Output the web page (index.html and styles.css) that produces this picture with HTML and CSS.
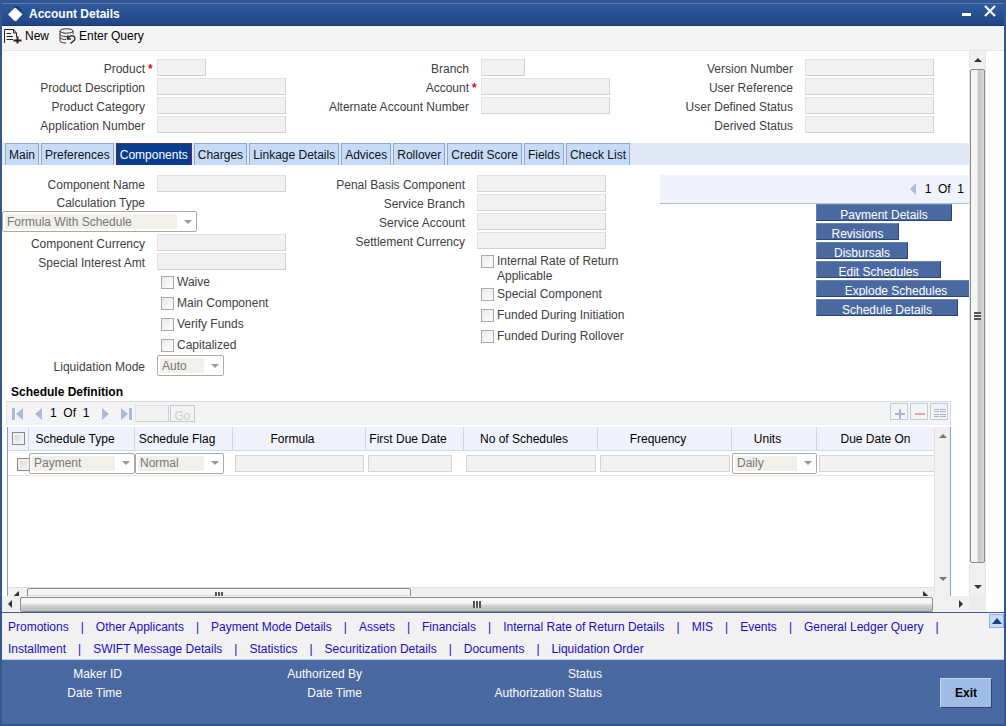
FILE: index.html
```html
<!DOCTYPE html>
<html lang="en">
<head>
<meta charset="utf-8">
<title>Account Details</title>
<link rel="stylesheet" href="styles.css">
</head>
<body>
<div class="window">
  <header class="titlebar">
    <svg class="logo" width="18" height="17" viewBox="0 0 18 17"><path d="M7 0h4l6 7.500-7 9H7z" fill="#0b3f78"/><path d="M9 2l7 6-7 8z" fill="#7fb0d8"/><path d="M8 1.500l7 7-7 7-7-7z" fill="#fff"/></svg>
    <h1>Account Details</h1>
    <div class="winbtns">
      <button type="button" aria-label="Minimize"><svg width="10" height="12" viewBox="0 0 10 12"><path d="M0 8h9v3H0z" fill="#fff"/></svg></button>
      <button type="button" aria-label="Close"><svg width="12" height="12" viewBox="0 0 12 12"><path d="M1 1l10 10M11 1L1 11" stroke="#fff" stroke-width="2.200"/></svg></button>
    </div>
  </header>

  <nav class="toolbar">
    <button type="button"><svg width="18" height="16" viewBox="0 0 18 16" fill="none" stroke="#222"><path d="M.5 15V1.500H9.500L12.500 5V9" /><path d="M9.500 1.500V5h3M2.500 5.500H7M2.500 8.500H9M2.500 11.500H9"/><path d="M9.500 12.500h8M13.500 8.500v7" stroke-width="2"/></svg>New</button>
    <button type="button"><svg width="17" height="16" viewBox="0 0 17 16" fill="none" stroke="#333"><ellipse cx="7.500" cy="3" rx="6.500" ry="2.200"/><path d="M1 3v10c0 1 3 2 6 2M14 3v3M1 6.500c1 2 6 2.500 9 1.500M1 9.500c1 1.500 4 2.200 6 2M1 12.500"/><path d="M8.500 10.500l3-2.500c4-1 5 2 4 4l-4 3.500M8.500 7.500v3.500H12" stroke-width="1.500"/></svg>Enter Query</button>
  </nav>

  <main class="work">
    <div class="workpane">
      <section class="keys">
        <div class="fieldcol">
          <div class="field"><label for="product">Product</label><i class="req">*</i><input id="product" class="w-code" disabled></div>
          <div class="field"><label for="pdesc">Product Description</label><input id="pdesc" disabled></div>
          <div class="field"><label for="pcat">Product Category</label><input id="pcat" disabled></div>
          <div class="field"><label for="appno">Application Number</label><input id="appno" disabled></div>
        </div>
        <div class="fieldcol">
          <div class="field"><label for="branch">Branch</label><input id="branch" class="w-branch" disabled></div>
          <div class="field"><label for="account">Account</label><i class="req">*</i><input id="account" disabled></div>
          <div class="field"><label for="altacc">Alternate Account Number</label><input id="altacc" disabled></div>
        </div>
        <div class="fieldcol">
          <div class="field"><label for="version">Version Number</label><input id="version" disabled></div>
          <div class="field"><label for="userref">User Reference</label><input id="userref" disabled></div>
          <div class="field"><label for="uds">User Defined Status</label><input id="uds" disabled></div>
          <div class="field"><label for="derived">Derived Status</label><input id="derived" disabled></div>
        </div>
      </section>

      <nav class="tabs">
        <a href="#">Main</a><a href="#">Preferences</a><a href="#" class="on">Components</a><a href="#">Charges</a><a href="#">Linkage Details</a><a href="#">Advices</a><a href="#">Rollover</a><a href="#">Credit Score</a><a href="#">Fields</a><a href="#">Check List</a>
      </nav>

      <section class="panel">
        <div class="fieldcol">
          <div class="field"><label for="cname">Component Name</label><input id="cname" disabled></div>
          <div class="field short"><label for="calc">Calculation Type</label></div>
          <select id="calc" class="calc" disabled><option>Formula With Schedule</option></select>
          <div class="field"><label for="ccy">Component Currency</label><input id="ccy" disabled></div>
          <div class="field"><label for="spint">Special Interest Amt</label><input id="spint" disabled></div>
          <div class="checks">
            <label><input type="checkbox" disabled>Waive</label>
            <label><input type="checkbox" disabled>Main Component</label>
            <label><input type="checkbox" disabled>Verify Funds</label>
            <label><input type="checkbox" disabled>Capitalized</label>
          </div>
          <div class="field"><label for="liq">Liquidation Mode</label><select id="liq" class="auto" disabled><option>Auto</option></select></div>
        </div>
        <div class="fieldcol">
          <div class="field"><label for="penal">Penal Basis Component</label><input id="penal" disabled></div>
          <div class="field"><label for="sbranch">Service Branch</label><input id="sbranch" disabled></div>
          <div class="field"><label for="sacc">Service Account</label><input id="sacc" disabled></div>
          <div class="field"><label for="sccy">Settlement Currency</label><input id="sccy" disabled></div>
          <div class="checks tight">
            <label><input type="checkbox" disabled><span>Internal Rate of Return<br>Applicable</span></label>
            <label><input type="checkbox" disabled>Special Component</label>
            <label><input type="checkbox" disabled>Funded During Initiation</label>
            <label><input type="checkbox" disabled>Funded During Rollover</label>
          </div>
        </div>
        <div class="side">
          <div class="sidebar-pager"><svg width="6" height="12" viewBox="0 0 6 12"><path d="M6 0v12L0 6z" fill="#a9bde0"/></svg><span>1&nbsp; Of&nbsp; 1</span></div>
          <div class="actions">
            <button type="button" class="a-payment">Payment Details</button>
            <button type="button" class="a-revisions">Revisions</button>
            <button type="button" class="a-disbursals">Disbursals</button>
            <button type="button" class="a-edit">Edit Schedules</button>
            <button type="button" class="a-explode">Explode Schedules</button>
            <button type="button" class="a-schedule">Schedule Details</button>
          </div>
        </div>
      </section>

      <section class="schedule">
        <h2>Schedule Definition</h2>
        <div class="pager">
          <button type="button" class="ic" aria-label="First"><svg width="11" height="12" viewBox="0 0 11 12" fill="#a9bad8"><path d="M0 0h3v12H0zM11 0v12L4 6z"/></svg></button>
          <button type="button" class="ic" aria-label="Previous"><svg width="7" height="12" viewBox="0 0 7 12" fill="#a9bad8"><path d="M7 0v12L0 6z"/></svg></button>
          <span class="count">1&nbsp; Of&nbsp; 1</span>
          <button type="button" class="ic" aria-label="Next"><svg width="7" height="12" viewBox="0 0 7 12" fill="#a9bad8"><path d="M0 0v12l7-6z"/></svg></button>
          <button type="button" class="ic" aria-label="Last"><svg width="11" height="12" viewBox="0 0 11 12" fill="#a9bad8"><path d="M8 0h3v12H8zM0 0v12l7-6z"/></svg></button>
          <div class="goto"><input aria-label="Page" disabled><button type="button" disabled>Go</button></div>
          <div class="rowbtns">
            <button type="button" aria-label="Add row"><svg width="16" height="15" viewBox="0 0 16 15"><path d="M4 10h10M9 5v10" stroke="#a9b6d2" stroke-width="2"/></svg></button>
            <button type="button" aria-label="Delete row"><svg width="16" height="15" viewBox="0 0 16 15"><path d="M4 10h10" stroke="#dfa9a9" stroke-width="2"/></svg></button>
            <button type="button" aria-label="Single record view"><svg width="16" height="15" viewBox="0 0 16 15"><path d="M3 5.500h5M3 7.500h5M3 10.500h5M3 12.500h5M9 5.500h6M9 7.500h6M9 10.500h6M9 12.500h6" stroke="#a3b3d3"/></svg></button>
          </div>
        </div>
        <div class="gridbox">
          <div class="gridmain">
            <table>
              <colgroup><col class="c-sel"><col class="c-type"><col class="c-flag"><col class="c-formula"><col class="c-flag"><col class="c-no"><col class="c-no"><col class="c-units"><col></colgroup>
              <thead><tr>
                <th class="sel"><input type="checkbox" aria-label="Select all"></th><th>Schedule Type</th><th>Schedule Flag</th><th>Formula</th><th>First Due Date</th><th>No of Schedules</th><th>Frequency</th><th>Units</th><th>Due Date On</th>
              </tr></thead>
              <tbody><tr>
                <td class="sel"><input type="checkbox" aria-label="Select row"></td>
                <td class="pick"><select class="full" aria-label="Schedule Type" disabled><option>Payment</option></select></td>
                <td class="pick"><select class="flag" aria-label="Schedule Flag" disabled><option>Normal</option></select></td>
                <td><input aria-label="Formula" disabled></td>
                <td><input class="date" aria-label="First Due Date" disabled></td>
                <td><input aria-label="No of Schedules" disabled></td>
                <td><input aria-label="Frequency" disabled></td>
                <td class="pick"><select class="full" aria-label="Units" disabled><option>Daily</option></select></td>
                <td class="last"><input aria-label="Due Date On" disabled></td>
              </tr></tbody>
            </table>
            <div class="hbar inner"><svg class="arr" width="5" height="9" viewBox="0 0 5 9"><path d="M5 0v9L0 4.500z" fill="#333"/></svg><div class="hthumb"><i class="grip"></i></div><svg class="arr" width="5" height="9" viewBox="0 0 5 9"><path d="M0 0v9l5-4.500z" fill="#333"/></svg></div>
          </div>
          <div class="vbar inner"><svg width="8" height="4" viewBox="0 0 8 4"><path d="M0 4h8L4 0z" fill="#777"/></svg><svg width="8" height="4" viewBox="0 0 8 4"><path d="M0 0h8L4 4z" fill="#777"/></svg></div>
        </div>
      </section>
    </div>
    <div class="vbar outer"><svg width="8" height="4" viewBox="0 0 8 4"><path d="M0 4h8L4 0z" fill="#333"/></svg><div class="vthumb"><i class="grip v"></i></div><svg width="8" height="4" viewBox="0 0 8 4"><path d="M0 0h8L4 4z" fill="#333"/></svg></div>
    <div class="hbar outer-h"><svg class="arr" width="4" height="8" viewBox="0 0 4 8"><path d="M4 0v8L0 4z" fill="#333"/></svg><div class="hthumb"><i class="grip"></i></div><svg class="arr" width="4" height="8" viewBox="0 0 4 8"><path d="M0 0v8l4-4z" fill="#333"/></svg></div>
    <div class="corner"></div>
  </main>

  <nav class="links">
    <ul>
      <li><a href="#">Promotions</a></li><li><a href="#">Other Applicants</a></li><li><a href="#">Payment Mode Details</a></li><li><a href="#">Assets</a></li><li><a href="#">Financials</a></li><li><a href="#">Internal Rate of Return Details</a></li><li><a href="#">MIS</a></li><li><a href="#">Events</a></li><li><a href="#">General Ledger Query</a></li><li><a href="#">Installment</a></li><li><a href="#">SWIFT Message Details</a></li><li><a href="#">Statistics</a></li><li><a href="#">Securitization Details</a></li><li><a href="#">Documents</a></li><li><a href="#">Liquidation Order</a></li>
    </ul>
    <button type="button" class="expand" aria-label="Expand"><svg width="10" height="6" viewBox="0 0 10 6"><path d="M0 6h10L5 0z" fill="#1d3f80"/></svg></button>
  </nav>

  <footer class="audit">
    <dl><dt>Maker ID</dt><dt>Date Time</dt></dl>
    <dl><dt>Authorized By</dt><dt>Date Time</dt></dl>
    <dl><dt>Status</dt><dt>Authorization Status</dt></dl>
    <button type="button" class="exit">Exit</button>
  </footer>
</div>
</body>
</html>
```
FILE: styles.css
```css
* { box-sizing: border-box; }

body {
  margin: 0;
  background: #36568f;
  color: #404040;
  font: 12px/15px "Liberation Sans", Arial, sans-serif;
}

h1, h2, ul, dl { margin: 0; padding: 0; }
button, input, select { margin: 0; font: inherit; color: inherit; }
button { padding: 0; border: 0; background: none; }
a { color: inherit; text-decoration: none; }
svg { display: block; flex: none; }

.window {
  display: flex;
  flex-direction: column;
  height: 100vh;
  border: 2px solid #36568f;
  border-top-width: 3px;
}

/* Title bar and toolbar */
.titlebar {
  display: flex;
  align-items: center;
  flex: none;
  height: 23px;
  padding: 0 8px 0 5px;
  border-top: 1px solid #5480bb;
  border-bottom: 1px solid #17386e;
  background: linear-gradient(#2f5b9e, #204583);
}
.titlebar h1 { margin-left: 4px; color: #fff; font-size: 12px; }
.winbtns { display: flex; align-self: flex-start; gap: 12px; margin: 1px 0 0 auto; }

.toolbar {
  display: flex;
  flex: none;
  gap: 10px;
  height: 25px;
  padding: 0 2px 4px;
  border-bottom: 1px solid #e6e6e6;
  background: #f4f4f4;
}
.toolbar button { display: flex; align-items: center; gap: 3px; color: #000; }

/* Scrolling work area */
.work {
  display: grid;
  flex: 1;
  grid-template: minmax(0, 1fr) 16px / minmax(0, 1fr) 17px;
  min-height: 0;
  padding-right: 18px;
  background: #fff;
}
.workpane {
  display: flex;
  flex-direction: column;
  overflow: hidden;
}

.keys { display: grid; grid-template-columns: 324px 324px 1fr; padding: 8px 0 10px; }
.fieldcol { display: flex; flex-direction: column; gap: 2px; min-width: 0; }
.field { display: flex; align-items: center; height: 17px; }
.field label { flex: none; width: 143px; padding-top: 3px; text-align: right; }
.field input, .field select { margin-left: 12px; }
.req { width: 12px; padding: 3px 0 0 3px; color: #d01010; font-style: normal; font-weight: bold; }
.req + input { margin-left: 0; }

input:not([type]) {
  width: 129px;
  height: 17px;
  border: 1px solid #e2e2e2;
  border-right-color: #d0d0d0;
  border-bottom-color: #d0d0d0;
  background: #f2f2f2;
}
input.w-code:not([type]) { width: 49px; }
input.w-branch:not([type]) { width: 44px; }

select {
  appearance: none;
  height: 21px;
  padding: 1px 24px 0 4px;
  border: 1px solid #aaa;
  border-radius: 2px;
  color: #777;
  opacity: 1;
  background:
    url("data:image/svg+xml,%3Csvg xmlns='http://www.w3.org/2000/svg' width='8' height='4'%3E%3Cpath d='M0 0h8L4 4z' fill='%23999'/%3E%3C/svg%3E") right 4px center no-repeat,
    linear-gradient(#f1f0ea, #f1f0ea) 2px 2px / calc(100% - 21px) calc(100% - 4px) no-repeat,
    #fff;
}
select.calc { width: 195px; }
select.auto { width: 67px; }

input[type="checkbox"] {
  appearance: none;
  flex: none;
  width: 13px;
  height: 13px;
  border: 1px solid #aaa;
  background: linear-gradient(135deg, #e8e8e8, #fff);
}

/* Tabs */
.tabs {
  display: flex;
  flex: none;
  gap: 2px;
  height: 22px;
  padding-left: 3px;
  background: #e0e8f6;
}
.tabs a {
  padding: 4px 3px 0;
  border: 1px solid #8fa6cf;
  border-bottom: 0;
  background: #c6dbf8;
  color: #111;
  white-space: nowrap;
}
.tabs a.on { border-color: #5a2a58; background: #0a3c90; color: #fff; }

/* Component panel */
.panel {
  display: grid;
  grid-template-columns: 320px 320px minmax(0, 1fr);
  padding: 10px 0 0;
}
.field.short { height: 15px; }
.checks { display: flex; flex-direction: column; gap: 6px; padding: 3px 0 2px 159px; }
.checks label { display: flex; align-items: flex-start; gap: 3px; min-height: 15px; }
.checks input { margin-top: 1px; }
.checks.tight label:first-child { margin-bottom: -3px; }

.side { padding-left: 18px; }
.sidebar-pager {
  display: flex;
  align-items: center;
  justify-content: flex-end;
  gap: 9px;
  height: 29px;
  padding-right: 5px;
  border-bottom: 1px solid #a8bfdc;
  background: #f0f3fc;
  color: #000;
}
.actions { display: flex; flex-direction: column; gap: 2px; padding-left: 156px; }
.actions button {
  flex: none;
  height: 17px;
  padding-top: 3px;
  overflow: hidden;
  border: 1px solid #6585b5;
  border-right-color: #2b4470;
  border-bottom-color: #2b4470;
  background: #4a69a1;
  color: #fff;
  white-space: nowrap;
}
.a-payment { width: 136px; }
.a-revisions { width: 83px; }
.a-disbursals { width: 92px; }
.a-edit { width: 125px; }
.a-explode { width: 160px; }
.a-schedule { width: 142px; }

/* Schedule grid */
.schedule {
  display: flex;
  flex: 1;
  flex-direction: column;
  min-height: 0;
  padding: 0 18px 0 4px;
}
.schedule h2 { margin: 11px 0 1px 5px; color: #000; font-size: 12px; line-height: 15px; }
.pager {
  display: flex;
  align-items: center;
  flex: none;
  height: 24px;
  padding: 0 2px 0 5px;
  border: 1px solid #d3dbe6;
  border-left-color: #e4e8ee;
  border-bottom: 0;
  background: #f4f4f4;
}
.pager .ic + .ic { margin-left: 12px; }
.pager .count { width: 38px; margin: 0 14px 0 8px; color: #000; white-space: nowrap; }
.goto { display: flex; gap: 1px; margin-left: 3px; }
.goto input:not([type]) { width: 34px; }
.goto button { width: 25px; height: 17px; padding-top: 3px; border: 1px solid #c5c8d0; color: #ccc; }
.rowbtns { display: flex; gap: 2px; align-self: flex-start; margin: 1px 0 0 auto; }
.rowbtns button { border: 1px solid #c0cad8; width: 18px; height: 17px; }

.gridbox {
  display: flex;
  flex: 1;
  min-height: 0;
  margin: 2px 0 0 1px;
  border: solid #7fa3cb;
  border-width: 0 1px;
}
.gridmain { display: flex; flex: 1; flex-direction: column; justify-content: space-between; min-width: 0; overflow: hidden; }
table { width: 100%; border-collapse: separate; border-spacing: 0; table-layout: fixed; }
.c-sel { width: 21px; }
.c-type { width: 106px; }
.c-flag { width: 98px; }
.c-formula { width: 133px; }
.c-no { width: 134px; }
.c-units { width: 85px; }
th {
  height: 24px;
  padding: 1px 13px 0 0;
  border: solid #d0d8e8;
  border-width: 0 1px 1px 0;
  background: #f0f3fc;
  color: #000;
  font-weight: normal;
  white-space: nowrap;
}
th:last-child { padding-right: 0; border-right: 0; }
td { height: 25px; padding: 0 2px; border-bottom: 1px solid #e0e5ee; vertical-align: middle; }
td.pick { padding: 0; }
td select { display: block; }
td input:not([type]) { display: block; width: 100%; border-color: #d4d4d4; }
td input.date:not([type]) { width: 84px; }
td.last { padding-right: 0; }
td.last input:not([type]) { border-right: 0; }
th.sel { padding: 0 0 0 4px; text-align: left; }
td.sel { padding: 3px 0 0 9px; overflow: hidden; }
.sel input[type="checkbox"] { display: block; border-color: #888; background: linear-gradient(135deg, #c8ccd2, #fff); box-shadow: inset 0 0 0 2px #f2f2f2; }
select.full { width: 100%; }
select.flag { width: 89px; }

/* Scroll bars */
.vbar { display: flex; flex-direction: column; align-items: center; background: #f0f0f0; }
.vbar.inner { justify-content: space-between; flex: none; width: 16px; padding: 7px 0 15px; border-left: 1px solid #e3e3e3; }
.vbar.outer { padding: 7px 0 7px; border: solid #e6e6e6; border-width: 0 1px; }
.vthumb {
  display: flex;
  align-items: center;
  justify-content: center;
  flex: 1;
  width: 15px;
  margin: 7px 0 22px;
  border: 1px solid #8c8c8c;
  border-radius: 2px;
  background: linear-gradient(90deg, #f5f5f5 45%, #c4c4c8 60%, #dcdcdc);
}
.hbar { display: flex; align-items: center; background: #f0f0f0; }
.hthumb {
  display: flex;
  align-items: center;
  justify-content: center;
  height: 15px;
  border: 1px solid #8c8c8c;
  border-radius: 2px;
  background: linear-gradient(#f5f5f5 40%, #cfcfd2 60%, #bdbdc0);
}
.outer-h { padding: 0 6px; }
.outer-h .hthumb { flex: 1; margin: 0 26px 0 8px; }
.hbar.inner { flex: none; align-items: flex-start; height: 9px; overflow: hidden; padding: 0 6px; border-top: 1px solid #e0e0e0; }
.hbar.inner .arr { margin-top: 3px; }
.hbar.inner .hthumb { width: 42%; margin: 0 auto 0 8px; }
.grip { width: 8px; height: 7px; background: repeating-linear-gradient(90deg, #555 0 2px, #f4f4f4 2px 3px); }
.grip.v { width: 7px; height: 8px; background: repeating-linear-gradient(#555 0 2px, #f4f4f4 2px 3px); }
.corner { background: #ececec; }

/* Link bar */
.links {
  display: flex;
  flex: none;
  align-items: flex-start;
  justify-content: space-between;
  border-top: 1px solid #3c5a94;
  border-bottom: 1px solid #b9cbe6;
  background: #f1f1f2;
  color: #1a0dbe;
}
.links ul { display: flex; flex: 1; flex-wrap: wrap; padding: 2px 24px 0 6px; list-style: none; }
.links li { height: 22px; line-height: 24px; white-space: nowrap; }
.links li:not(:last-child)::after { content: "|"; margin: 0 12px; }
.expand {
  display: flex;
  align-items: center;
  justify-content: center;
  width: 15px;
  height: 14px;
  margin-top: 1px;
  border: 1px solid #8fb0dc;
  background: #c6dbf8;
}

/* Audit footer */
.audit { display: flex; flex: none; height: 64px; padding-top: 5px; background: #4a69a1; color: #fff; }
.audit dl { width: 240px; }
.audit dt { width: 120px; height: 19px; line-height: 18px; text-align: right; white-space: nowrap; }
.exit {
  width: 52px;
  height: 30px;
  margin: 13px 12px 0 auto;
  border: 1px solid #c0d4f0;
  border-right-color: #2b4470;
  border-bottom-color: #2b4470;
  background: #a0bce4;
  color: #000;
  font-weight: bold;
}
```
